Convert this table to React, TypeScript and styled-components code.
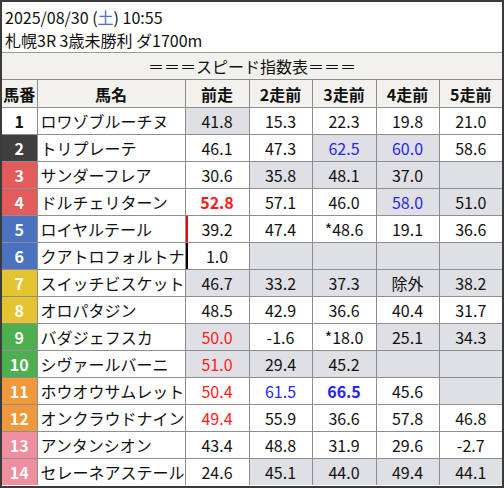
import React from 'react';
import styled, { createGlobalStyle, css } from 'styled-components';

const GlobalStyle = createGlobalStyle`
  html, body {
    margin: 0;
    padding: 0;
    background: #ffffff;
  }
  body {
    font-family: "Noto Sans CJK JP", "Noto Sans", sans-serif;
    color: #111;
  }
`;

type Tone = 'red' | 'blue' | 'normal';

interface Cell {
  v: string;
  gray?: boolean;
  tone?: Tone;
  bold?: boolean;
}

interface Horse {
  no: number;
  name: string;
  mark?: string; // thick left line on 前走 cell
  cells: Cell[];
}

const WAKU: Record<number, { bg: string; fg: string }> = {
  1: { bg: '#ffffff', fg: '#111111' },
  2: { bg: '#3f3f3f', fg: '#ffffff' },
  3: { bg: '#e35b5b', fg: '#ffffff' },
  4: { bg: '#e35b5b', fg: '#ffffff' },
  5: { bg: '#4a72bf', fg: '#ffffff' },
  6: { bg: '#4a72bf', fg: '#ffffff' },
  7: { bg: '#e6c431', fg: '#ffffff' },
  8: { bg: '#e6c431', fg: '#ffffff' },
  9: { bg: '#4caf50', fg: '#ffffff' },
  10: { bg: '#4caf50', fg: '#ffffff' },
  11: { bg: '#f0983b', fg: '#ffffff' },
  12: { bg: '#f0983b', fg: '#ffffff' },
  13: { bg: '#f08d9e', fg: '#ffffff' },
  14: { bg: '#f08d9e', fg: '#ffffff' },
};

const c = (v: string, gray = false, tone: Tone = 'normal', bold = false): Cell => ({ v, gray, tone, bold });

const horses: Horse[] = [
  { no: 1, name: 'ロワゾブルーチヌ', cells: [c('41.8', true), c('15.3'), c('22.3'), c('19.8'), c('21.0')] },
  { no: 2, name: 'トリプレーテ', cells: [c('46.1'), c('47.3'), c('62.5', true, 'blue'), c('60.0', true, 'blue'), c('58.6')] },
  { no: 3, name: 'サンダーフレア', cells: [c('30.6'), c('35.8', true), c('48.1', true), c('37.0', true), c('', true)] },
  { no: 4, name: 'ドルチェリターン', cells: [c('52.8', false, 'red', true), c('57.1'), c('46.0'), c('58.0', true, 'blue'), c('51.0', true)] },
  { no: 5, name: 'ロイヤルテール', mark: '#ff0000', cells: [c('39.2'), c('47.4'), c('*48.6'), c('19.1'), c('36.6')] },
  { no: 6, name: 'クアトロフォルトナ', mark: '#000000', cells: [c('1.0'), c('', true), c('', true), c('', true), c('', true)] },
  { no: 7, name: 'スイッチビスケット', cells: [c('46.7', true), c('33.2', true), c('37.3', true), c('除外', true), c('38.2', true)] },
  { no: 8, name: 'オロパタジン', cells: [c('48.5'), c('42.9'), c('36.6'), c('40.4'), c('31.7')] },
  { no: 9, name: 'バダジェフスカ', cells: [c('50.0', true, 'red'), c('-1.6'), c('*18.0'), c('25.1', true), c('34.3', true)] },
  { no: 10, name: 'シヴァールバーニ', cells: [c('51.0', true, 'red'), c('29.4', true), c('45.2', true), c('', true), c('', true)] },
  { no: 11, name: 'ホウオウサムレット', cells: [c('50.4', false, 'red'), c('61.5', false, 'blue'), c('66.5', false, 'blue', true), c('45.6'), c('', true)] },
  { no: 12, name: 'オンクラウドナイン', cells: [c('49.4', false, 'red'), c('55.9'), c('36.6'), c('57.8'), c('46.8')] },
  { no: 13, name: 'アンタンシオン', cells: [c('43.4'), c('48.8'), c('31.9'), c('29.6'), c('-2.7')] },
  { no: 14, name: 'セレーネアステール', cells: [c('24.6'), c('45.1', true), c('44.0', true), c('49.4', true), c('44.1', true)] },
];

const Frame = styled.div`
  width: 504px;
  height: 488px;
  box-sizing: border-box;
  border: 2px solid #3b3b3b;
  background: #ffffff;
  overflow: hidden;
`;

const RaceHeader = styled.div`
  height: 51px;
  box-sizing: border-box;
  padding: 4px 0 0 3px;
  font-size: 16px;
  line-height: 23px;
  color: #111;
  border-bottom: 1px solid #9a9a9a;
`;

const Weekday = styled.span`
  color: #4d72c4;
`;

const TitleBar = styled.div`
  height: 26px;
  line-height: 26px;
  text-align: center;
  font-size: 16px;
  background: #f2f1ee;
  border-bottom: 1px solid #8e8e8e;
  color: #111;
`;

const Table = styled.table`
  width: 500px;
  table-layout: fixed;
  border-collapse: collapse;
  font-size: 16px;
`;

const Th = styled.th`
  height: 27px;
  padding: 0;
  background: #f2f1ee;
  font-weight: 700;
  text-align: center;
  border: 1px solid #8e8e8e;
  border-top: none;
  color: #111;
  &:first-child { border-left: none; }
  &:last-child { border-right: none; }
`;

const NoCell = styled.td<{ $bg: string; $fg: string }>`
  height: 26px;
  padding: 0;
  text-align: center;
  font-weight: 700;
  background: ${({ $bg }) => $bg};
  color: ${({ $fg }) => $fg};
  border: 1px solid #8e8e8e;
  border-left: none;
`;

const NameCell = styled.td`
  padding: 0 0 0 3px;
  white-space: nowrap;
  overflow: hidden;
  border: 1px solid #8e8e8e;
  letter-spacing: 0;
`;

const toneColor: Record<Tone, string> = {
  red: '#ff1a1a',
  blue: '#2626f0',
  normal: '#111111',
};

const ValueCell = styled.td<{ $gray?: boolean; $tone: Tone; $bold?: boolean; $mark?: string }>`
  padding: 0;
  text-align: center;
  border: 1px solid #8e8e8e;
  background: ${({ $gray }) => ($gray ? '#dfe0e5' : '#ffffff')};
  color: ${({ $tone }) => toneColor[$tone]};
  font-weight: ${({ $bold }) => ($bold ? 700 : 400)};
  &:last-child { border-right: none; }
  ${({ $mark }) =>
    $mark &&
    css`
      box-shadow: inset 2px 0 0 ${$mark};
    `}
`;

const tbodyLastRow = css`
  tr:last-child td { border-bottom: none; }
`;

const Body = styled.tbody`
  ${tbodyLastRow}
`;

const headers = ['馬番', '馬名', '前走', '2走前', '3走前', '4走前', '5走前'];
const widths = [35, 148, 64, 63, 64, 63, 63];

export default function App() {
  return (
    <>
      <GlobalStyle />
      <Frame>
        <RaceHeader>
          <div>
            2025/08/30 (<Weekday>土</Weekday>) 10:55
          </div>
          <div>札幌3R 3歳未勝利 ダ1700m</div>
        </RaceHeader>
        <TitleBar>＝＝＝スピード指数表＝＝＝</TitleBar>
        <Table>
          <colgroup>
            {widths.map((w, i) => (
              <col key={i} style={{ width: w }} />
            ))}
          </colgroup>
          <thead>
            <tr>
              {headers.map((h) => (
                <Th key={h}>{h}</Th>
              ))}
            </tr>
          </thead>
          <Body>
            {horses.map((h) => (
              <tr key={h.no}>
                <NoCell $bg={WAKU[h.no].bg} $fg={WAKU[h.no].fg}>
                  {h.no}
                </NoCell>
                <NameCell>{h.name}</NameCell>
                {h.cells.map((cell, i) => (
                  <ValueCell
                    key={i}
                    $gray={cell.gray}
                    $tone={cell.tone ?? 'normal'}
                    $bold={cell.bold}
                    $mark={i === 0 ? h.mark : undefined}
                  >
                    {cell.v}
                  </ValueCell>
                ))}
              </tr>
            ))}
          </Body>
        </Table>
      </Frame>
    </>
  );
}
